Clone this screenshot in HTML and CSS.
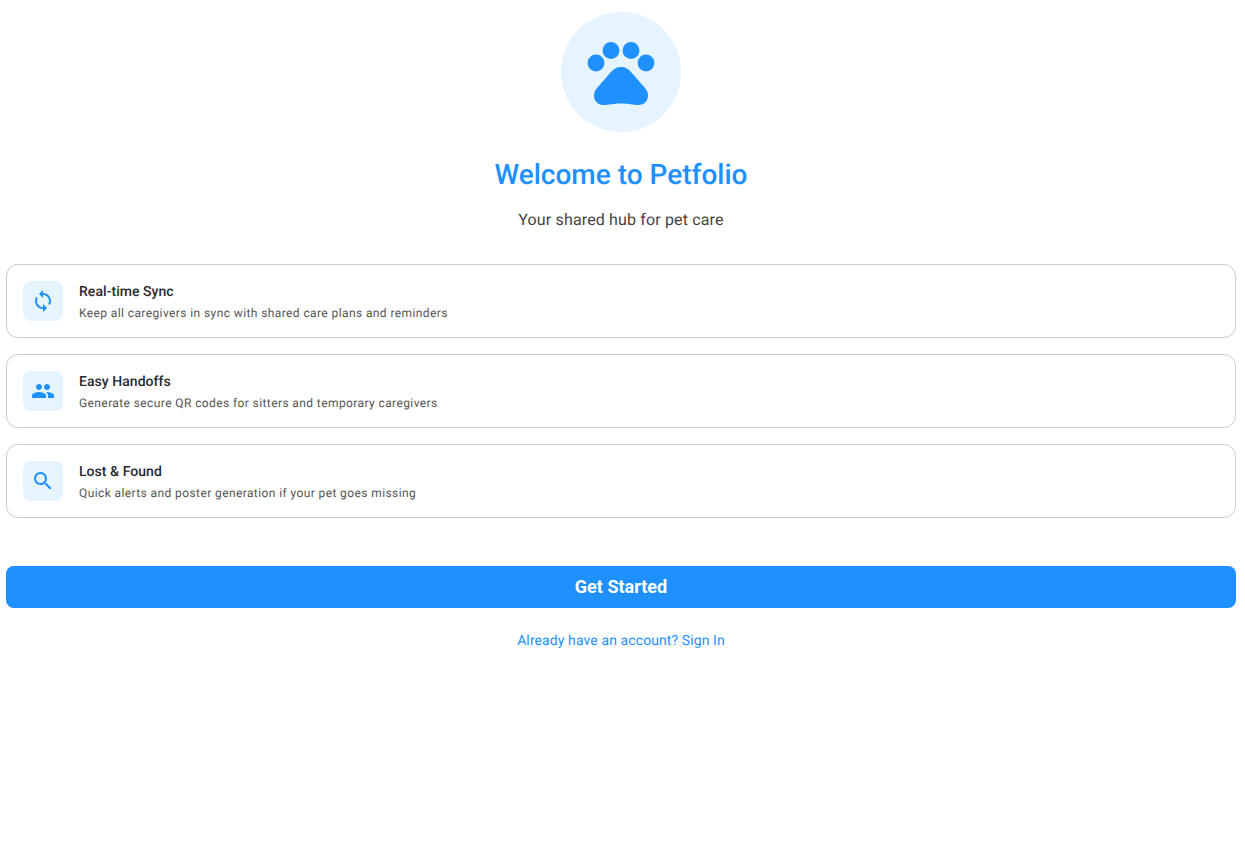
FILE: index.html
```html
<!DOCTYPE html>
<html lang="en">
<head>
  <meta charset="UTF-8" />
  <meta name="viewport" content="width=device-width, initial-scale=1.0" />
  <title>Welcome to Petfolio</title>
  <link rel="stylesheet" href="styles.css">
</head>
<body>
  <div class="container">
    <div class="logo-circle">
      <svg class="logo" viewBox="0 0 120 120" width="120" height="120">
        <circle cx="35" cy="51" r="8.4"/>
        <circle cx="50" cy="38.500" r="8.4"/>
        <circle cx="70" cy="38.500" r="8.4"/>
        <circle cx="85" cy="51" r="8.4"/>
        <path d="M60 55c-4.500 0-7.500 2-10 5L36.500 75.500c-2 2.300-3.500 4.500-3.500 8 0 5.500 4 9.500 9.500 9.500 5 0 10-1.500 17.500-1.500s12.500 1.500 17.500 1.500c5.500 0 9.500-4 9.500-9.500 0-3.500-1.500-5.700-3.500-8L70 60c-2.500-3-5.500-5-10-5z"/>
      </svg>
    </div>

    <h1>Welcome to Petfolio</h1>
    <p class="subtitle">Your shared hub for pet care</p>

    <div class="features">
      <div class="card">
        <div class="card-icon">
          <svg viewBox="0 0 24 24" width="24" height="24"><path d="M12 4V1L8 5l4 4V6c3.310 0 6 2.690 6 6 0 1.010-.25 1.970-.7 2.800l1.460 1.460C19.540 15.030 20 13.570 20 12c0-4.420-3.580-8-8-8zm0 14c-3.310 0-6-2.690-6-6 0-1.010.25-1.970.7-2.800L5.240 7.740C4.460 8.970 4 10.430 4 12c0 4.420 3.580 8 8 8v3l4-4-4-4v3z"/></svg>
        </div>
        <div class="card-text">
          <h3>Real-time Sync</h3>
          <p>Keep all caregivers in sync with shared care plans and reminders</p>
        </div>
      </div>

      <div class="card">
        <div class="card-icon">
          <svg viewBox="0 0 24 24" width="24" height="24"><path d="M16 11c1.660 0 2.990-1.340 2.990-3S17.660 5 16 5c-1.660 0-3 1.340-3 3s1.340 3 3 3zm-8 0c1.660 0 2.990-1.340 2.990-3S9.660 5 8 5C6.340 5 5 6.340 5 8s1.340 3 3 3zm0 2c-2.330 0-7 1.170-7 3.500V19h14v-2.500c0-2.330-4.670-3.500-7-3.500zm8 0c-.29 0-.62.020-.97.050 1.160.840 1.970 1.970 1.970 3.450V19h6v-2.500c0-2.330-4.670-3.500-7-3.500z"/></svg>
        </div>
        <div class="card-text">
          <h3>Easy Handoffs</h3>
          <p>Generate secure QR codes for sitters and temporary caregivers</p>
        </div>
      </div>

      <div class="card">
        <div class="card-icon">
          <svg viewBox="0 0 24 24" width="24" height="24"><path d="M15.500 14h-.79l-.28-.27C15.410 12.590 16 11.110 16 9.500 16 5.910 13.090 3 9.500 3S3 5.910 3 9.500 5.910 16 9.500 16c1.610 0 3.090-.59 4.230-1.570l.27.28v.79l5 4.990L20.490 19l-4.990-5zm-6 0C7.010 14 5 11.990 5 9.500S7.010 5 9.500 5 14 7.010 14 9.500 11.990 14 9.500 14z"/></svg>
        </div>
        <div class="card-text">
          <h3>Lost &amp; Found</h3>
          <p>Quick alerts and poster generation if your pet goes missing</p>
        </div>
      </div>
    </div>

    <button class="primary-button">Get Started</button>
    <a class="signin-link" href="#">Already have an account? Sign In</a>
  </div>
</body>
</html>
```

FILE: styles.css
```css
* {
  margin: 0; padding: 0; box-sizing: border-box;
}
body {
  font-family: Roboto, sans-serif;
  background: #fff;
  color: #212121;
  text-rendering: geometricPrecision;
}
.container {
  width: 1230px;
  margin-left: 6px;
  padding-top: 12px;
  display: flex;
  flex-direction: column;
  align-items: center;
}
.logo-circle {
  width: 120px;
  height: 120px;
  border-radius: 50%;
  background: #e6f4ff;
}
.logo {
  display: block;
  fill: #1e90ff;
}
h1 {
  margin-top: 25px;
  font-size: 28px;
  line-height: 36px;
  font-weight: 500;
  color: #1e90ff;
}
.subtitle {
  margin-top: 15px;
  font-size: 16px;
  line-height: 24px;
  letter-spacing: 0.15px;
  color: #444;
}
.features {
  width: 100%;
  margin-top: 32px;
  display: flex;
  flex-direction: column;
  gap: 16px;
}
.card {
  height: 74px;
  padding: 16px;
  display: flex;
  align-items: center;
  gap: 16px;
  border: 1px solid #ccc;
  border-radius: 12px;
  background: #fff;
}
.card-icon {
  width: 40px;
  height: 40px;
  border-radius: 8px;
  background: #e6f4ff;
  display: flex;
  align-items: center;
  justify-content: center;
  flex-shrink: 0;
}
.card-icon svg {
  fill: #1e90ff;
}
.card-text {
  padding-top: 2px;
}
.card-text h3 {
  font-size: 14px;
  line-height: 20px;
  font-weight: 500;
  letter-spacing: 0.05px;
  color: #2b2b2b;
}
.card-text p {
  margin-top: 1px;
  font-size: 12px;
  line-height: 20px;
  letter-spacing: 0.4px;
  color: #555;
}
.primary-button {
  width: 100%;
  height: 42px;
  margin-top: 48px;
  padding-bottom: 2px;
  border: none;
  border-radius: 8px;
  background: #1e90ff;
  color: #fff;
  font-family: Roboto, sans-serif;
  font-size: 18px;
  font-weight: 700;
  cursor: pointer;
}
.signin-link {
  margin-top: 23px;
  font-size: 14px;
  line-height: 20px;
  letter-spacing: 0.1px;
  color: #1e90ff;
  text-decoration: none;
}
```
